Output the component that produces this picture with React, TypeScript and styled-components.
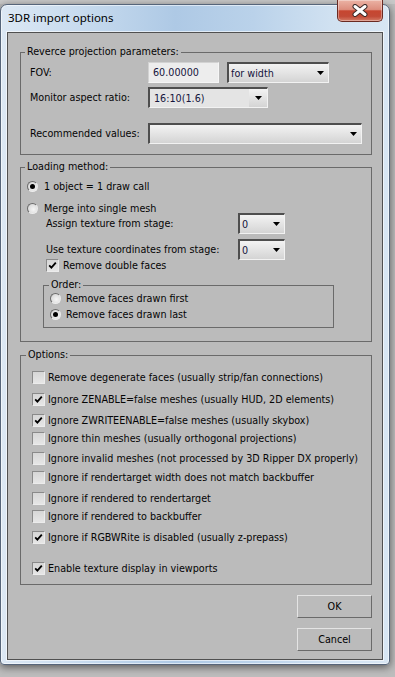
import React from "react";
import styled, { createGlobalStyle } from "styled-components";

const UI_FONT = `"DejaVu Sans Condensed", "DejaVu Sans", Tahoma, sans-serif`;
const UI_SIZE = "10.7px";

const GlobalStyle = createGlobalStyle`
  html, body { margin: 0; padding: 0; }
  body {
    width: 395px;
    height: 677px;
    overflow: hidden;
    background: linear-gradient(#c9c9c9 0 4px, #bdbdbd 4px);
    font-family: ${UI_FONT};
    font-stretch: condensed;
  }
  * { box-sizing: border-box; }
`;

const Page = styled.div`
  padding-top: 4px;
  width: 395px;
  height: 677px;
`;

const Window = styled.div`
  position: relative;
  width: 390px;
  height: 661px;
  border: 1px solid #56657a;
  border-radius: 7px 7px 4px 4px;
  background: linear-gradient(90deg, #dce8f4 0%, #c6daee 22%, #aec9e5 45%, #bad2ea 65%, #d0e1f1 85%, #d8e6f3 100%);
  box-shadow: 0 2px 8px rgba(0, 0, 0, 0.55), inset 0 0 0 1px rgba(255, 255, 255, 0.55);
  padding: 0 6px 4px;
  display: flex;
  flex-direction: column;
`;

const TitleBar = styled.div`
  height: 27px;
  display: flex;
  align-items: center;
  padding: 0 0 2px 1px;
  font-family: "Noto Sans", "Open Sans", sans-serif;
  font-stretch: normal;
  font-size: 11.5px;
  color: #000;
`;

const CloseButton = styled.div`
  position: absolute;
  top: -5px;
  right: 6px;
  width: 46px;
  height: 22px;
  border: 1px solid #6a2a22;
  border-top: none;
  border-radius: 0 0 5px 5px;
  background: linear-gradient(#ebb3a5 0%, #dd8e7e 45%, #c64630 52%, #c24a36 78%, #d47c67 100%);
  box-shadow: inset 0 0 0 1px rgba(255, 255, 255, 0.35);
  display: flex;
  align-items: center;
  justify-content: center;
`;

const Client = styled.div`
  flex: 1;
  background: #bbbbbb;
  border: 1px solid #505050;
  box-shadow: 0 0 0 1px rgba(255, 255, 255, 0.6);
  padding: 13px 10px 0 12px;
  display: flex;
  flex-direction: column;
  color: #050505;
  font-size: ${UI_SIZE};
`;

const Group = styled.fieldset<{ $mt: number; $ml?: number; $w?: number }>`
  margin: ${(p) => p.$mt}px 0 0 ${(p) => p.$ml ?? 0}px;
  padding: 0;
  border: 1px solid #6a6a6a;
  min-width: 0;
  ${(p) => (p.$w ? `width: ${p.$w}px;` : "")}
`;

const Legend = styled.legend<{ $ml: number }>`
  margin-left: ${(p) => p.$ml}px;
  padding: 0 2px;
  font-size: ${UI_SIZE};
  line-height: 12px;
  color: #050505;
`;

const GroupBody = styled.div<{ $pt: number; $pb: number; $pl: number }>`
  padding: ${(p) => p.$pt}px 0 ${(p) => p.$pb}px ${(p) => p.$pl}px;
  display: flex;
  flex-direction: column;
  align-items: flex-start;
`;

const FieldRow = styled.div<{ $mt?: number; $ml?: number }>`
  display: flex;
  align-items: center;
  height: 21px;
  margin-top: ${(p) => p.$mt ?? 0}px;
  margin-left: ${(p) => p.$ml ?? 0}px;
`;

const FieldLabel = styled.div<{ $w: number }>`
  width: ${(p) => p.$w}px;
  white-space: nowrap;
`;

const TextField = styled.div<{ $w: number }>`
  width: ${(p) => p.$w}px;
  height: 21px;
  padding-left: 4px;
  display: flex;
  align-items: center;
  border: 1px solid;
  border-color: #d2d2d2 #f6f6f6 #f6f6f6 #d2d2d2;
  background: #ededed;
  color: #14143c;
  margin-right: 8px;
`;

const Select = styled.div<{ $w: number }>`
  width: ${(p) => p.$w}px;
  height: 21px;
  display: flex;
  align-items: center;
  justify-content: space-between;
  padding: 0 4px 0 2px;
  border-style: solid;
  border-width: 2px 1px 1px 2px;
  border-color: #4e4e4e #f2f2f2 #f2f2f2 #4e4e4e;
  background: linear-gradient(#f3f3f3, #d4d4d4);
  color: #14143c;
`;

const Combo = styled.div<{ $w: number }>`
  width: ${(p) => p.$w}px;
  height: 21px;
  display: flex;
  border-style: solid;
  border-width: 2px 1px 1px 2px;
  border-color: #4e4e4e #f2f2f2 #f2f2f2 #4e4e4e;
  background: linear-gradient(#f3f3f3, #d4d4d4);
  color: #14143c;
`;

const ComboText = styled.div`
  flex: 1;
  display: flex;
  align-items: center;
  padding-left: 4px;
  background: #e4e4e4;
`;

const ComboButton = styled.div`
  width: 18px;
  display: flex;
  align-items: center;
  justify-content: center;
`;

const ChoiceRow = styled.div<{ $mt?: number; $ml?: number; $gap: number }>`
  display: flex;
  align-items: center;
  gap: ${(p) => p.$gap}px;
  height: 12px;
  margin-top: ${(p) => p.$mt ?? 0}px;
  margin-left: ${(p) => p.$ml ?? 0}px;
  white-space: nowrap;
`;

const RadioCircle = styled.span`
  width: 11px;
  height: 11px;
  flex: none;
  border-radius: 50%;
  border: 1px solid;
  border-color: #6c6c6c #ececec #ececec #6c6c6c;
  background: radial-gradient(circle at 60% 60%, #f6f6f6, #cfcfcf);
  display: flex;
  align-items: center;
  justify-content: center;
`;

const RadioDot = styled.span`
  width: 5px;
  height: 5px;
  border-radius: 50%;
  background: #000;
`;

const CheckBox = styled.span`
  width: 13px;
  height: 13px;
  flex: none;
  border: 1px solid;
  border-color: #8a8a8a #ececec #ececec #8a8a8a;
  background: linear-gradient(#d6d6d6, #e6e6e6);
  display: flex;
  align-items: center;
  justify-content: center;
`;

const ButtonColumn = styled.div`
  display: flex;
  flex-direction: column;
  align-items: flex-end;
  gap: 10px;
  margin-top: 10px;
`;

const Button = styled.div`
  width: 75px;
  height: 23px;
  display: flex;
  align-items: center;
  justify-content: center;
  border: 1px solid;
  border-color: #e4e4e4 #6a6a6a #6a6a6a #e4e4e4;
  background: #bbbbbb;
  color: #000;
  font-size: ${UI_SIZE};
`;

const Arrow = () => (
  <svg width="7" height="4" viewBox="0 0 7 4">
    <polygon points="0,0 7,0 3.5,4" fill="#000" />
  </svg>
);

const Check = () => (
  <svg width="9" height="9" viewBox="0 0 9 9">
    <path d="M1.2 4.3 L3.4 6.6 L7.8 1.6" stroke="#000" strokeWidth="1.8" fill="none" />
  </svg>
);

const Radio: React.FC<{ label: string; checked?: boolean; mt?: number; ml?: number; gap: number }> = ({
  label,
  checked,
  mt,
  ml,
  gap,
}) => (
  <ChoiceRow $mt={mt} $ml={ml} $gap={gap}>
    <RadioCircle>{checked && <RadioDot />}</RadioCircle>
    <span>{label}</span>
  </ChoiceRow>
);

const Checkbox: React.FC<{ label: string; checked?: boolean; mt?: number; ml?: number; gap: number }> = ({
  label,
  checked,
  mt,
  ml,
  gap,
}) => (
  <ChoiceRow $mt={mt} $ml={ml} $gap={gap}>
    <CheckBox>{checked && <Check />}</CheckBox>
    <span>{label}</span>
  </ChoiceRow>
);

const options: { label: string; checked: boolean; mt: number }[] = [
  { label: "Remove degenerate faces (usually strip/fan connections)", checked: false, mt: 0 },
  { label: "Ignore ZENABLE=false meshes (usually HUD, 2D elements)", checked: true, mt: 10 },
  { label: "Ignore ZWRITEENABLE=false meshes (usually skybox)", checked: true, mt: 9 },
  { label: "Ignore thin meshes (usually orthogonal projections)", checked: false, mt: 6 },
  { label: "Ignore invalid meshes (not processed by 3D Ripper DX properly)", checked: false, mt: 8 },
  { label: "Ignore if rendertarget width does not match backbuffer", checked: false, mt: 7 },
  { label: "Ignore if rendered to rendertarget", checked: false, mt: 9 },
  { label: "Ignore if rendered to backbuffer", checked: false, mt: 6 },
  { label: "Ignore if RGBWRite is disabled (usually z-prepass)", checked: true, mt: 9 },
  { label: "Enable texture display in viewports", checked: true, mt: 19 },
];

export default function App() {
  return (
    <>
      <GlobalStyle />
      <Page>
        <Window>
          <TitleBar>3DR import options</TitleBar>
          <CloseButton>
            <svg width="16" height="13" viewBox="0 0 16 13">
              <path d="M3 2.5 L13 10.5 M13 2.5 L3 10.5" stroke="#3b2a28" strokeWidth="5" strokeLinecap="round" />
              <path d="M3 2.5 L13 10.5 M13 2.5 L3 10.5" stroke="#ffffff" strokeWidth="3" strokeLinecap="round" />
            </svg>
          </CloseButton>
          <Client>
            <Group $mt={0}>
              <Legend $ml={4}>Reverce projection parameters:</Legend>
              <GroupBody $pt={4} $pb={10} $pl={9}>
                <FieldRow>
                  <FieldLabel $w={118}>FOV:</FieldLabel>
                  <TextField $w={71}>60.00000</TextField>
                  <Select $w={102}>
                    <span>for width</span>
                    <Arrow />
                  </Select>
                </FieldRow>
                <FieldRow $mt={4}>
                  <FieldLabel $w={118}>Monitor aspect ratio:</FieldLabel>
                  <Combo $w={120}>
                    <ComboText>16:10(1.6)</ComboText>
                    <ComboButton>
                      <Arrow />
                    </ComboButton>
                  </Combo>
                </FieldRow>
                <FieldRow $mt={15}>
                  <FieldLabel $w={118}>Recommended values:</FieldLabel>
                  <Select $w={214}>
                    <span />
                    <Arrow />
                  </Select>
                </FieldRow>
              </GroupBody>
            </Group>

            <Group $mt={6}>
              <Legend $ml={4}>Loading method:</Legend>
              <GroupBody $pt={7} $pb={13} $pl={6}>
                <Radio label="1 object = 1 draw call" checked gap={6} />
                <Radio label="Merge into single mesh" mt={10} gap={6} />
                <FieldRow $mt={-1} $ml={19}>
                  <FieldLabel $w={192}>Assign texture from stage:</FieldLabel>
                  <Select $w={47}>
                    <span>0</span>
                    <Arrow />
                  </Select>
                </FieldRow>
                <FieldRow $mt={5} $ml={19}>
                  <FieldLabel $w={192}>Use texture coordinates from stage:</FieldLabel>
                  <Select $w={47}>
                    <span>0</span>
                    <Arrow />
                  </Select>
                </FieldRow>
                <Checkbox label="Remove double faces" checked mt={-1} ml={19} gap={4} />
                <Group $mt={8} $ml={16} $w={291}>
                  <Legend $ml={5}>Order:</Legend>
                  <GroupBody $pt={1} $pb={7} $pl={6}>
                    <Radio label="Remove faces drawn first" gap={5} />
                    <Radio label="Remove faces drawn last" checked mt={4} gap={5} />
                  </GroupBody>
                </Group>
              </GroupBody>
            </Group>

            <Group $mt={7}>
              <Legend $ml={5}>Options:</Legend>
              <GroupBody $pt={10} $pb={10} $pl={11}>
                {options.map((o) => (
                  <Checkbox key={o.label} label={o.label} checked={o.checked} mt={o.mt} gap={3} />
                ))}
              </GroupBody>
            </Group>

            <ButtonColumn>
              <Button>OK</Button>
              <Button>Cancel</Button>
            </ButtonColumn>
          </Client>
        </Window>
      </Page>
    </>
  );
}
